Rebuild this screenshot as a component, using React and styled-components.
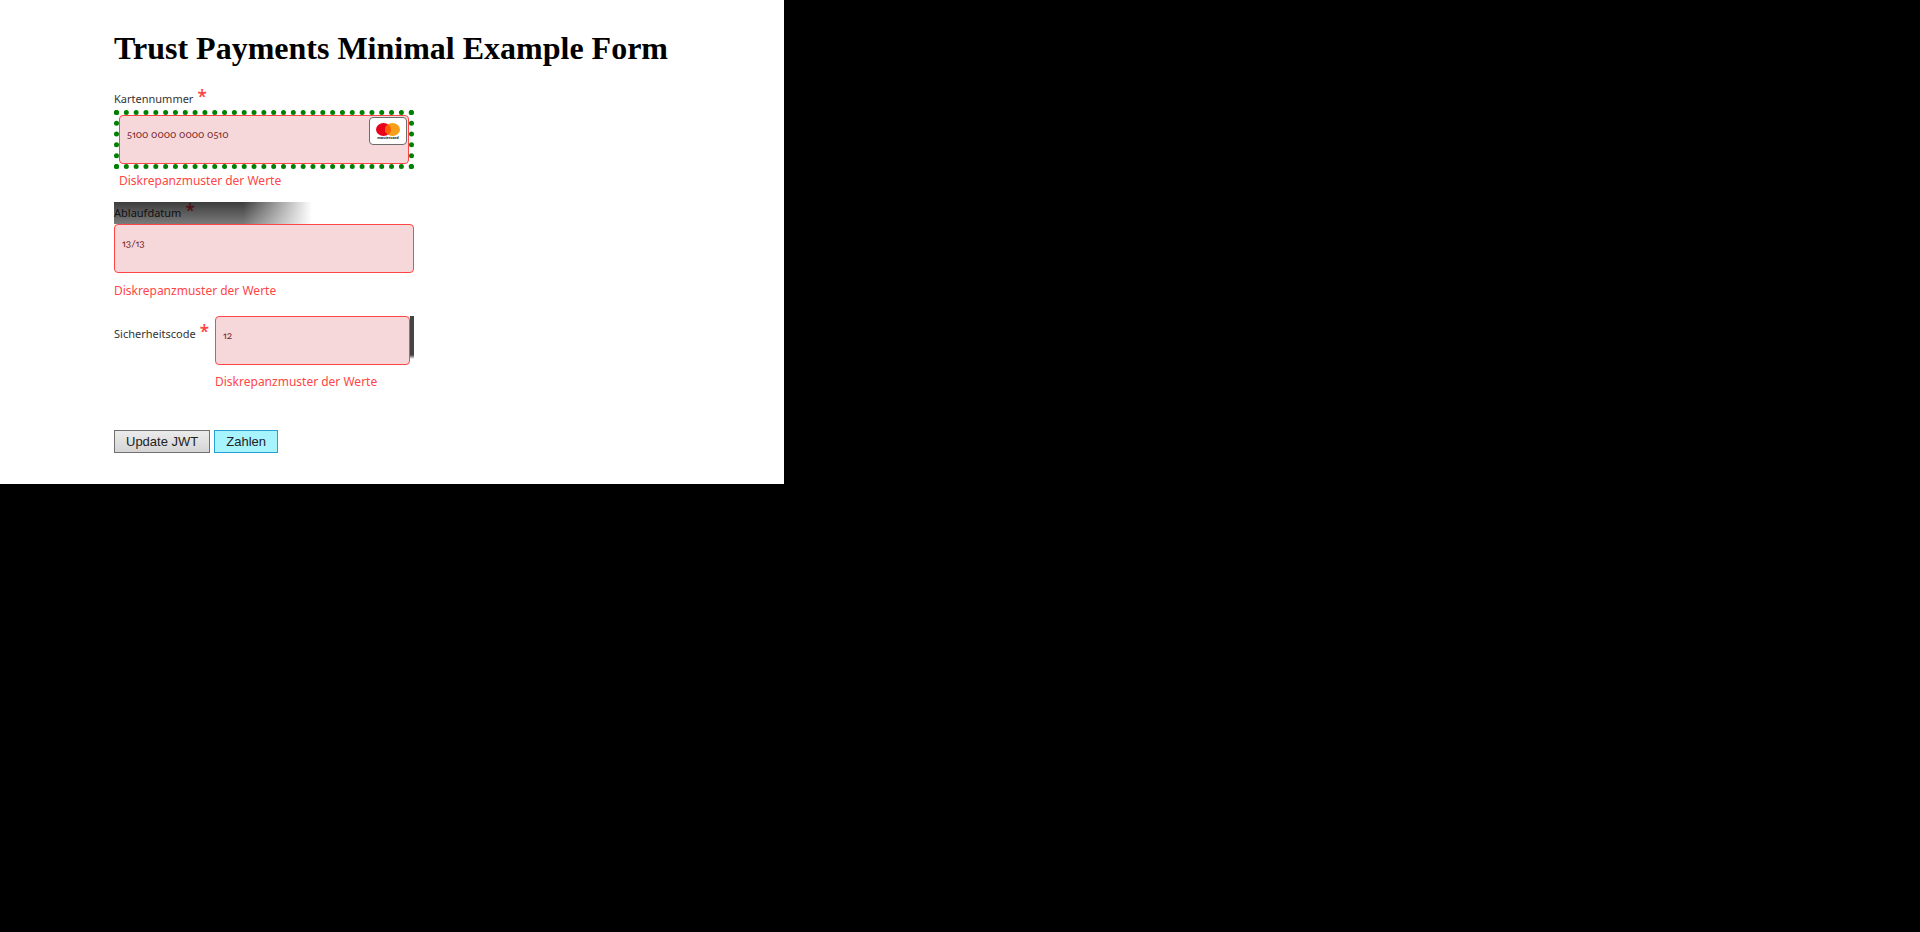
import React from "react";
import styled, { createGlobalStyle } from "styled-components";

const GlobalStyle = createGlobalStyle`
  * { box-sizing: border-box; }
  html { background: #000; }
  body { margin: 0; }
`;

const Page = styled.main`
  width: max-content;
  padding: 26px 116px 31px 114px;
  background: #fff;
`;

const Title = styled.h1`
  margin: 0 0 20px;
  font: bold 32px/44px "Liberation Serif", serif;
  color: #000;
`;

const Form = styled.form`
  width: 300px;
  font-family: "Noto Sans", sans-serif;
`;

const Field = styled.div`
  display: ${(p) => (p.$inline ? "grid" : "block")};
  grid-template-columns: 101px 1fr;
  margin-bottom: ${(p) => (p.$gap ? p.$gap : 0)}px;
`;

const Label = styled.label`
  position: relative;
  display: block;
  height: ${(p) => (p.$inline ? 36 : 20)}px;
  padding-top: ${(p) => (p.$inline ? 9 : 0)}px;
  font-size: 11px;
  line-height: 18px;
  color: #333;
  white-space: nowrap;
`;

const Star = styled.span`
  margin-left: 4px;
  font-size: 17px;
  line-height: 1px;
  font-weight: 600;
  color: #ff4545;
`;

const ShadedLabel = styled(Label)`
  height: 22px;
  padding-top: 2px;
  &::after {
    content: "";
    position: absolute;
    inset: 0 auto 0 0;
    width: 202px;
    background: linear-gradient(rgba(0, 0, 0, 0.76), rgba(0, 0, 0, 0.52));
    mask-image: linear-gradient(to right, #000 64%, transparent 98%);
  }
`;

const DottedFrame = styled.div`
  position: relative;
  border: 5px dotted green;
`;

const Input = styled.input`
  display: block;
  width: 100%;
  height: 49px;
  margin: 0;
  padding: 0 7px 12px;
  border: 1px solid #ff4545;
  border-radius: 4px;
  background: #f6d7da;
  color: #721c24;
  font: 10px/16px Lato, sans-serif;
  font-variant-numeric: oldstyle-nums proportional-nums;
  outline: none;
`;

const CodeFrame = styled.div`
  padding-right: 4px;
  background: linear-gradient(#444 39px, #fff 43px) right top / 4px 100% no-repeat;
`;

const ErrorText = styled.p`
  grid-column: ${(p) => (p.$inline ? 2 : 1)};
  margin: ${(p) => p.$top}px 0 0 ${(p) => (p.$indent ? 5 : 0)}px;
  font-size: 12px;
  line-height: 18px;
  color: #ff4545;
  white-space: nowrap;
`;

const CardIcon = styled.svg`
  position: absolute;
  top: 2px;
  right: 2px;
`;

const Actions = styled.div`
  display: flex;
  gap: 4px;
`;

const Button = styled.button`
  height: 23px;
  padding: 0 11px;
  border: 1px solid ${(p) => (p.$primary ? "#2a9fd6" : "#707070")};
  background: ${(p) => (p.$primary ? "#a7f4ff" : "linear-gradient(#ebebeb, #d5d5d5)")};
  color: #222;
  font: 13px/16px "Liberation Sans", sans-serif;
  white-space: nowrap;
`;

const Mastercard = () => (
  <CardIcon width="38" height="28" viewBox="0 0 38 28" role="img" aria-label="Mastercard">
    <rect x="0.5" y="0.5" width="37" height="27" rx="3.5" fill="#fff" stroke="#6b6b6b" />
    <ellipse cx="14.5" cy="12.5" rx="7.5" ry="6.5" fill="#eb001b" />
    <ellipse cx="23.5" cy="12.5" rx="7.5" ry="6.5" fill="#f79e1b" />
    <path d="M19 7.3a7.5 6.5 0 0 1 0 10.4a7.5 6.5 0 0 1 0-10.4z" fill="#ff5f00" />
    <text x="19" y="22" textAnchor="middle" fontFamily="Liberation Sans" fontWeight="bold" fontSize="4">mastercard</text>
  </CardIcon>
);

export default function App() {
  return (
    <>
      <GlobalStyle />
      <Page>
        <Title>Trust Payments Minimal Example Form</Title>
        <Form onSubmit={(e) => e.preventDefault()}>
          <Field $gap={12}>
            <Label htmlFor="card">Kartennummer<Star>*</Star></Label>
            <DottedFrame>
              <Input id="card" defaultValue="5100 0000 0000 0510" />
              <Mastercard />
            </DottedFrame>
            <ErrorText $top={3} $indent>Diskrepanzmuster der Werte</ErrorText>
          </Field>
          <Field $gap={16}>
            <ShadedLabel htmlFor="expiry">Ablaufdatum<Star>*</Star></ShadedLabel>
            <Input id="expiry" defaultValue="13/13" />
            <ErrorText $top={9}>Diskrepanzmuster der Werte</ErrorText>
          </Field>
          <Field $inline $gap={39}>
            <Label $inline htmlFor="code">Sicherheitscode<Star>*</Star></Label>
            <CodeFrame>
              <Input id="code" defaultValue="12" />
            </CodeFrame>
            <ErrorText $inline $top={8}>Diskrepanzmuster der Werte</ErrorText>
          </Field>
          <Actions>
            <Button type="button">Update JWT</Button>
            <Button type="submit" $primary>Zahlen</Button>
          </Actions>
        </Form>
      </Page>
    </>
  );
}
